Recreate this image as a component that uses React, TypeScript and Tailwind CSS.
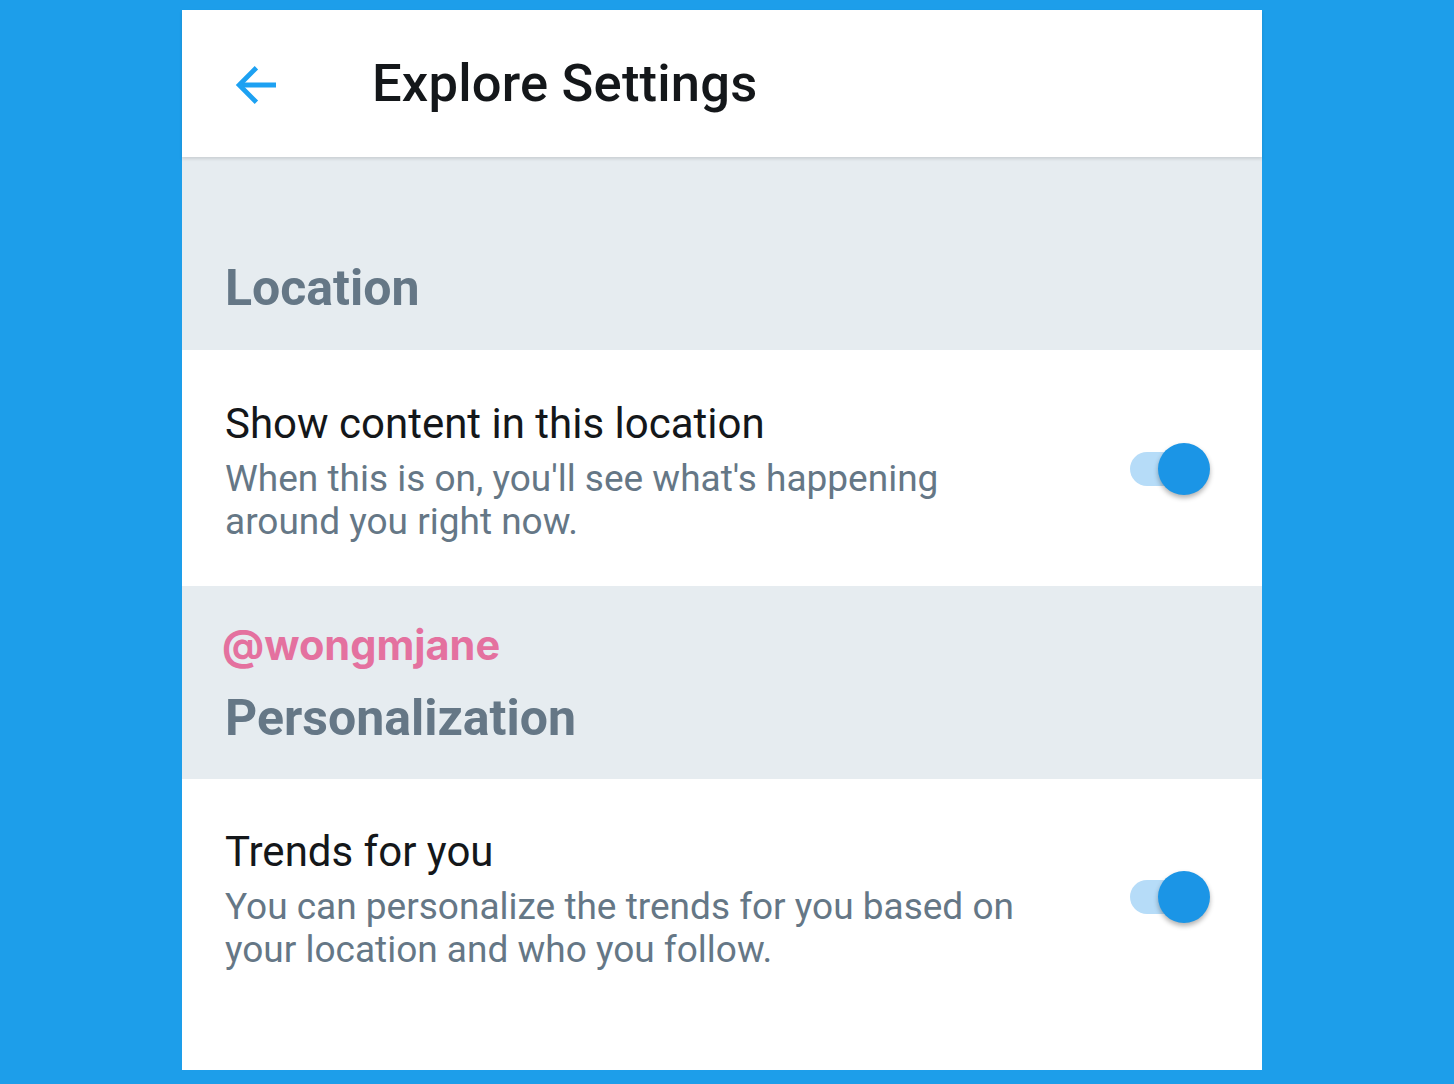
import { FC } from "react";

type ToggleRowProps = {
  title: string;
  description: string;
};

const Toggle: FC = () => {
  return (
    <div className="relative w-[84px] h-[54px] shrink-0 -mt-[4px]">
      <div className="absolute left-[2px] top-[10px] w-[62px] h-[34px] rounded-full bg-[#b6dcf8]" />
      <div className="absolute right-[2px] top-[1px] w-[52px] h-[52px] rounded-full bg-[#1b95e6] shadow-[0_3px_5px_rgba(0,0,0,0.3)]" />
    </div>
  );
};

const ToggleRow: FC<ToggleRowProps> = ({ title, description }) => {
  return (
    <div className="flex items-center justify-between pl-[43px] pr-[50px]">
      <div className="flex flex-col">
        <span className="text-[42px] leading-[50px] text-[#14171a]">{title}</span>
        <span className="text-[37px] leading-[43px] text-[#657786] max-w-[820px] mt-[8px]">
          {description}
        </span>
      </div>
      <Toggle />
    </div>
  );
};

const App: FC = () => {
  return (
    <div
      className="w-[1454px] h-[1084px] bg-[#1d9eea] pt-[10px] pl-[182px]"
      style={{ fontFamily: "Roboto, 'Noto Sans', sans-serif" }}
    >
      <div className="w-[1080px] h-[1060px] bg-white flex flex-col">
        <div className="h-[147px] flex items-center shrink-0 relative z-10 shadow-[0_2px_3px_rgba(0,0,0,0.12)]">
          <svg
            className="ml-[50px] mt-[2px]"
            width="48"
            height="48"
            viewBox="0 0 24 24"
            fill="none"
            stroke="#1da1f2"
            strokeWidth="2.4"
            strokeLinecap="butt"
            strokeLinejoin="miter"
          >
            <path d="M22 12H3.8" />
            <path d="M12.2 3.4L3.6 12l8.6 8.6" />
          </svg>
          <h1 className="ml-[92px] text-[52.5px] font-medium text-[#14171a] tracking-[0.2px]">
            Explore Settings
          </h1>
        </div>

        <div className="h-[193px] bg-[#e6ecf0] flex items-end pl-[43px] pb-[34px] shrink-0">
          <h2 className="text-[50px] leading-[56px] font-bold text-[#657786]">Location</h2>
        </div>

        <div className="h-[236px] flex items-center shrink-0">
          <div className="w-full mt-[6px]">
            <ToggleRow
              title="Show content in this location"
              description="When this is on, you'll see what's happening around you right now."
            />
          </div>
        </div>

        <div className="h-[193px] bg-[#e6ecf0] flex flex-col justify-end pl-[40px] pb-[33px] shrink-0">
          <span
            className="text-[41.5px] leading-[46px] font-bold text-[#e4719f]"
            style={{ fontFamily: "Inter, 'Open Sans', sans-serif" }}
          >
            @wongmjane
          </span>
          <h2 className="text-[50px] leading-[56px] font-bold text-[#657786] mt-[22px] ml-[3px]">
            Personalization
          </h2>
        </div>

        <div className="flex-1 pt-[48px]">
          <ToggleRow
            title="Trends for you"
            description="You can personalize the trends for you based on your location and who you follow."
          />
        </div>
      </div>
    </div>
  );
};

export default App;
